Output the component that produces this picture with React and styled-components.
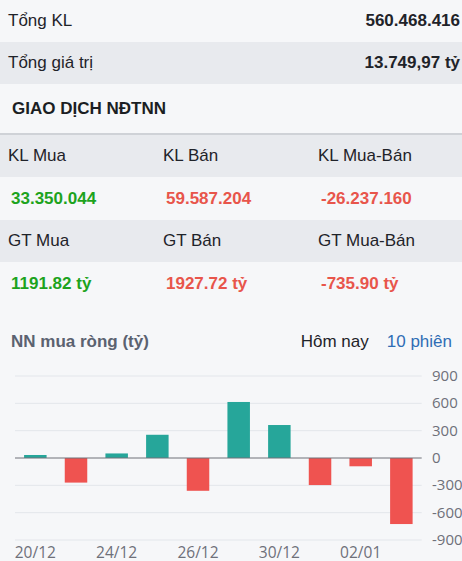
import React from "react";
import styled, { createGlobalStyle } from "styled-components";

const Global = createGlobalStyle`
  html, body { margin: 0; padding: 0; background: #f6f7f9; }
  body { font-family: "Liberation Sans", Arial, sans-serif; color: #1f2329; }
`;

const Page = styled.div`
  width: 462px;
  height: 561px;
  overflow: hidden;
  background: #f6f7f9;
  display: flex;
  flex-direction: column;
`;

const SummaryRow = styled.div`
  height: 42px;
  display: flex;
  align-items: center;
  justify-content: space-between;
  padding: 0 2px 0 8px;
  font-size: 17px;
  background: ${(p) => (p.$shade ? "#e8eaee" : "#f6f7f9")};
`;

const SummaryValue = styled.span`
  font-weight: 700;
  color: #1f2329;
`;

const SectionHeader = styled.div`
  height: 49px;
  display: flex;
  align-items: center;
  padding-left: 12px;
  font-size: 17px;
  font-weight: 700;
  color: #1b1e23;
  border-bottom: 2px solid #cfd2d7;
`;

const Grid = styled.div`
  display: grid;
  grid-template-columns: 155px 155px 152px;
`;

const Cell = styled.div`
  height: ${(p) => (p.$label ? "42px" : "43px")};
  display: flex;
  align-items: center;
  padding-left: ${(p) => (p.$label ? "8px" : "11px")};
  font-size: 17px;
  font-weight: ${(p) => (p.$label ? 400 : 700)};
  background: ${(p) => (p.$label ? "#e8eaee" : "#f6f7f9")};
  color: ${(p) => p.$color || "#1f2329"};
`;

const ChartSection = styled.div`
  margin-top: 24px;
  display: flex;
  flex-direction: column;
`;

const ChartHead = styled.div`
  height: 26px;
  display: flex;
  align-items: center;
  padding: 0 10px 0 11px;
  font-size: 17px;
`;

const ChartTitle = styled.div`
  font-weight: 700;
  color: #5b6270;
  flex: 1;
`;

const Tab = styled.div`
  color: ${(p) => (p.$active ? "#2f6db5" : "#1f2329")};
  margin-left: ${(p) => (p.$active ? "18px" : "0")};
`;

const ChartSvg = styled.svg`
  display: block;
  margin-top: 10px;
  font-family: "Open Sans", "Liberation Sans", sans-serif;
`;

const GREEN = "#1da31d";
const RED = "#e8554b";

const stats = [
  { label: "KL Mua", value: "33.350.044", color: GREEN },
  { label: "KL Bán", value: "59.587.204", color: RED },
  { label: "KL Mua-Bán", value: "-26.237.160", color: RED },
];
const stats2 = [
  { label: "GT Mua", value: "1191.82 tỷ", color: GREEN },
  { label: "GT Bán", value: "1927.72 tỷ", color: RED },
  { label: "GT Mua-Bán", value: "-735.90 tỷ", color: RED },
];

const bars = [33, -270, 50, 255, -360, 615, 362, -297, -91, -725];
const xLabels = [
  { i: 0, t: "20/12" },
  { i: 2, t: "24/12" },
  { i: 4, t: "26/12" },
  { i: 6, t: "30/12" },
  { i: 8, t: "02/01" },
];

function Chart() {
  const left = 15;
  const right = 421.7;
  const zeroY = 93;
  const step = 27.33;
  const scale = step / 300;
  const slot = (right - left) / 10;
  const bw = 22.5;
  const ticks = [900, 600, 300, 0, -300, -600, -900];
  return (
    <ChartSvg width="462" height="196" viewBox="0 0 462 196">
      {ticks.map((t) => {
        const y = zeroY - t * scale;
        return (
          <g key={t}>
            {t !== 0 && (
              <line x1={left} x2={right} y1={y} y2={y} stroke="#e3e6eb" strokeWidth="1" />
            )}
            <text x="432" y={y + 5} fontSize="15" fill="#6e7079">
              {t}
            </text>
          </g>
        );
      })}
      {bars.map((v, i) => {
        const cx = left + slot * (i + 0.5);
        const h = Math.abs(v) * scale;
        const y = v >= 0 ? zeroY - h : zeroY;
        return (
          <rect
            key={i}
            x={cx - bw / 2}
            y={y}
            width={bw}
            height={h}
            fill={v >= 0 ? "#26a69a" : "#ef5350"}
          />
        );
      })}
      <line x1={left} x2={right} y1={zeroY} y2={zeroY} stroke="#6e7079" strokeWidth="1" />
      {xLabels.map((l) => (
        <text
          key={l.t}
          x={left + slot * (l.i + 0.5)}
          y="193"
          fontSize="15.5"
          fill="#6e7079"
          textAnchor="middle"
        >
          {l.t}
        </text>
      ))}
    </ChartSvg>
  );
}

export default function App() {
  return (
    <Page>
      <Global />
      <SummaryRow>
        <span>Tổng KL</span>
        <SummaryValue>560.468.416</SummaryValue>
      </SummaryRow>
      <SummaryRow $shade>
        <span>Tổng giá trị</span>
        <SummaryValue>13.749,97 tỷ</SummaryValue>
      </SummaryRow>
      <SectionHeader>GIAO DỊCH NĐTNN</SectionHeader>
      <Grid>
        {stats.map((s) => (
          <Cell $label key={s.label}>{s.label}</Cell>
        ))}
        {stats.map((s) => (
          <Cell key={s.value} $color={s.color}>{s.value}</Cell>
        ))}
        {stats2.map((s) => (
          <Cell $label key={s.label}>{s.label}</Cell>
        ))}
        {stats2.map((s) => (
          <Cell key={s.value} $color={s.color}>{s.value}</Cell>
        ))}
      </Grid>
      <ChartSection>
        <ChartHead>
          <ChartTitle>NN mua ròng (tỷ)</ChartTitle>
          <Tab>Hôm nay</Tab>
          <Tab $active>10 phiên</Tab>
        </ChartHead>
        <Chart />
      </ChartSection>
    </Page>
  );
}
